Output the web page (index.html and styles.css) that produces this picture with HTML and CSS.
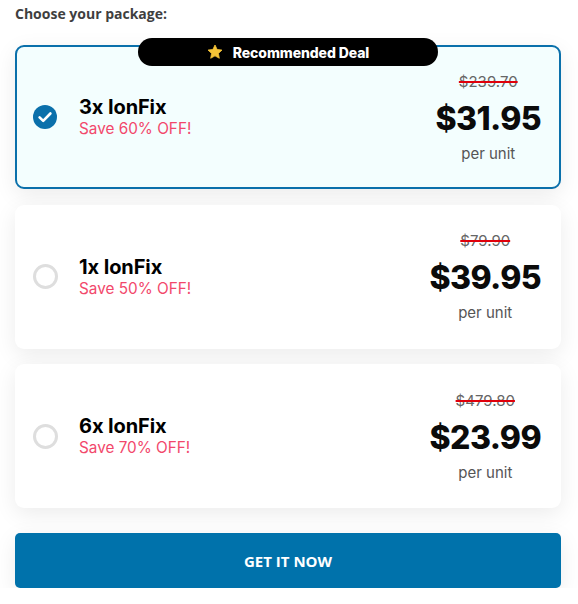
FILE: index.html
```html
<!DOCTYPE html>
<html lang="en">
<head>
<meta charset="utf-8">
<title>Choose your package</title>
<link rel="stylesheet" href="styles.css">
</head>
<body>
<div class="wrap">
  <h2 class="title">Choose your package:</h2>
  <div class="packages">
    <label class="card selected">
      <span class="badge"><svg class="star" viewBox="0 0 24 24" width="16" height="16"><path d="M12 1.5l3.2 6.7 7.3.9-5.4 5 1.4 7.3L12 17.8l-6.5 3.6 1.4-7.3-5.4-5 7.3-.9z" fill="#f6c437" stroke="#f6c437" stroke-width="1.2" stroke-linejoin="round"/></svg>Recommended Deal</span>
      <span class="radio checked"><svg viewBox="0 0 24 24" width="24" height="24"><circle cx="12" cy="12" r="12" fill="#0a70ab"/><path d="M6.6 12.4l3.6 3.5 7.2-7.4" fill="none" stroke="#fff" stroke-width="2.6" stroke-linecap="round" stroke-linejoin="round"/></svg></span>
      <span class="info">
        <span class="name">3x IonFix</span>
        <span class="save">Save 60% OFF!</span>
      </span>
      <span class="price">
        <span class="old">$239.70</span>
        <span class="now">$31.95</span>
        <span class="unit">per unit</span>
      </span>
    </label>
    <label class="card">
      <span class="radio"></span>
      <span class="info">
        <span class="name">1x IonFix</span>
        <span class="save">Save 50% OFF!</span>
      </span>
      <span class="price">
        <span class="old">$79.90</span>
        <span class="now">$39.95</span>
        <span class="unit">per unit</span>
      </span>
    </label>
    <label class="card">
      <span class="radio"></span>
      <span class="info">
        <span class="name">6x IonFix</span>
        <span class="save">Save 70% OFF!</span>
      </span>
      <span class="price">
        <span class="old">$479.80</span>
        <span class="now">$23.99</span>
        <span class="unit">per unit</span>
      </span>
    </label>
  </div>
  <button class="cta">GET IT NOW</button>
</div>
</body>
</html>
```
FILE: styles.css
```css
html, body {
  margin: 0;
  padding: 0;
  background: #fff;
}
.wrap {
  padding: 4px 17px 0 15px;
  font-family: Inter, "Open Sans", sans-serif;
}
.title {
  margin: 0 0 21px;
  font-family: "Open Sans", sans-serif;
  font-weight: 700;
  font-size: 14px;
  line-height: 20px;
  color: #3f3f3f;
}
.packages {
  display: flex;
  flex-direction: column;
  gap: 15.5px;
}
.card {
  position: relative;
  display: flex;
  align-items: center;
  height: 144px;
  box-sizing: border-box;
  padding: 0 20px 0 18px;
  background: #fff;
  border-radius: 9px;
  box-shadow: 0 6px 22px rgba(0, 0, 0, 0.08);
}
.card.selected {
  background: #f3fefe;
  border: 2px solid #0a70ab;
  padding: 0 18px 0 16px;
}
.badge {
  position: absolute;
  top: -9px;
  left: 50%;
  transform: translateX(-50%);
  width: 300px;
  height: 28px;
  border-radius: 14px;
  background: #000;
  color: #fff;
  font-size: 14px;
  font-weight: 800;
  display: flex;
  align-items: center;
  justify-content: center;
  gap: 10px;
  letter-spacing: -0.1px;
}
.star {
  margin-top: -1px;
}
.radio {
  flex: none;
  width: 25px;
  height: 25px;
  box-sizing: border-box;
  border: 3px solid #dedede;
  border-radius: 50%;
  margin-right: 21px;
}
.radio.checked {
  border: 0;
  width: 24px;
  height: 24px;
  margin-right: 22px;
  display: flex;
}
.info {
  display: flex;
  flex-direction: column;
  flex: 1;
}
.name {
  font-size: 20px;
  font-weight: 700;
  color: #000;
  line-height: 23px;
  letter-spacing: -0.1px;
}
.save {
  font-size: 15.3px;
  color: #f2476b;
  line-height: 19px;
}
.price {
  display: flex;
  flex-direction: column;
  align-items: center;
  text-align: center;
  margin-top: 1px;
}
.old {
  font-size: 15px;
  color: #666;
  line-height: 20px;
  margin-bottom: 2px;
  text-decoration: line-through;
  text-decoration-color: #e0000b;
  text-decoration-thickness: 2px;
}
.now {
  font-size: 32px;
  font-weight: 800;
  color: #0b0b0b;
  line-height: 50px;
  letter-spacing: -0.6px;
}
.unit {
  font-size: 15px;
  color: #555;
  line-height: 20px;
}
.cta {
  display: block;
  width: 100%;
  margin-top: 25px;
  height: 55px;
  border: 0;
  border-radius: 5px;
  background: #0072ab;
  color: #fff;
  font-family: "Open Sans", sans-serif;
  font-weight: 700;
  font-size: 15px;
  box-shadow: 0 6px 22px rgba(0, 0, 0, 0.08);
  cursor: pointer;
}
```
